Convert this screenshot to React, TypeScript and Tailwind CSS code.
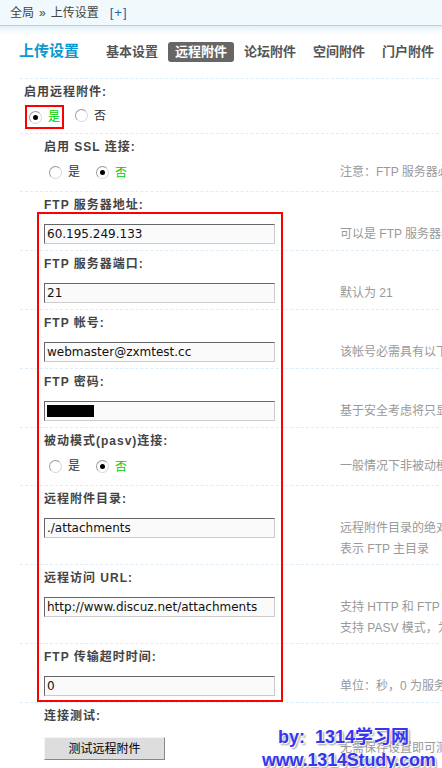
import type { ReactNode } from "react";

const SANS = "font-['Liberation_Sans','Noto_Sans_CJK_SC',sans-serif]";

function Radio({ checked, label }: { checked?: boolean; label: string }) {
  return (
    <span className="inline-flex items-center">
      <span className="w-[13px] h-[13px] rounded-full border border-[#9a9a9a] border-r-[#d8d8d8] border-b-[#d8d8d8] bg-white flex items-center justify-center">
        {checked && <span className="w-[5px] h-[5px] rounded-full bg-black" />}
      </span>
      <span className={`ml-[6px] ${checked ? "text-[#00cc00]" : "text-[#333]"}`}>{label}</span>
    </span>
  );
}

function Label({ children, indent = true }: { children: ReactNode; indent?: boolean }) {
  return (
    <div
      className={`pt-[5px] leading-[16px] text-[12px] font-bold tracking-[1px] text-[#444] ${
        indent ? "pl-[24px]" : "pl-[4px]"
      }`}
    >
      {children}
    </div>
  );
}

function Note({ lines }: { lines: string[] }) {
  return (
    <div className="text-[#999] leading-[21px] whitespace-nowrap text-[12px]">
      {lines.map((l) => (
        <div key={l}>{l}</div>
      ))}
    </div>
  );
}

function TextInput({ value, password }: { value?: string; password?: boolean }) {
  return (
    <div className="w-[231px] h-[20px] border border-[#666] border-r-[#ccc] border-b-[#ccc] bg-[#fafafa] flex items-center pl-[2px] font-['DejaVu_Sans',sans-serif] text-[12px] text-[#111] whitespace-nowrap overflow-hidden">
      {password ? <span className="w-[47px] h-[12px] bg-black" /> : value}
    </div>
  );
}

function InputSection({ label, value, password, note }: { label: string; value?: string; password?: boolean; note: string[] }) {
  return (
    <div className={`border-t border-dashed border-[#ddeefa] ${note.length > 1 ? "pb-[4px]" : "pb-[5px]"}`}>
      <Label>{label}</Label>
      <div className="flex mt-[11px] pl-[24px]">
        <div className="w-[296px] shrink-0">
          <TextInput value={value} password={password} />
        </div>
        <Note lines={note} />
      </div>
    </div>
  );
}

function RadioSection({ label, yes, note }: { label: string; yes: boolean; note: string }) {
  return (
    <div className="border-t border-dashed border-[#ddeefa] pb-[8px]">
      <Label>{label}</Label>
      <div className="flex mt-[6px] h-[22px] items-center pl-[24px]">
        <div className="w-[296px] shrink-0 flex items-center pl-[5px]">
          <Radio checked={yes} label="是" />
          <span className="ml-[16px]">
            <Radio checked={!yes} label="否" />
          </span>
        </div>
        <Note lines={[note]} />
      </div>
    </div>
  );
}

export default function App() {
  const tabs = ["基本设置", "远程附件", "论坛附件", "空间附件", "门户附件"];
  return (
    <div className={`relative w-[442px] h-[768px] overflow-hidden bg-white text-[12px] text-[#333] ${SANS}`}>
      {/* breadcrumb */}
      <div className="h-[26px] bg-[#f2f9fd] border-b border-[#b7d1dc] pl-[10px] flex items-center gap-[5px] whitespace-nowrap text-[12px] text-[#444]">
        <span>全局</span>
        <span>»</span>
        <span>上传设置</span>
        <span className="text-[#2366a8] text-[13px] ml-[6px] tracking-[1px]">[+]</span>
      </div>
      <div className="h-[8px] bg-gradient-to-b from-[#e4f1f9] to-white" />

      {/* tabs */}
      <div className="h-[44px] flex items-start pt-[8px] pl-[19px] whitespace-nowrap">
        <div className="text-[15px] font-bold text-[#0a99d0] leading-[16px] mt-[1px] w-[80px]">上传设置</div>
        <div className="flex gap-[3px]">
          {tabs.map((t) => (
            <div
              key={t}
              className={`h-[20px] px-[7px] rounded-[3px] text-[13px] font-bold leading-[20px] ${
                t === "远程附件" ? "bg-[#666] text-white" : "text-[#555]"
              }`}
            >
              {t}
            </div>
          ))}
        </div>
      </div>

      <div className="ml-[20px] w-[700px]">
        {/* 启用远程附件 */}
        <div className="border-t border-dashed border-[#ddeefa] pb-[5px]">
          <Label indent={false}>启用远程附件:</Label>
          <div className="flex mt-[6px] h-[22px] items-center pl-[5px]">
            <span className="inline-flex items-center h-[24px] px-[2px] border-2 border-[#ff0000]">
              <Radio checked label="是" />
            </span>
            <span className="ml-[11px]">
              <Radio label="否" />
            </span>
          </div>
        </div>

        <RadioSection label="启用 SSL 连接:" yes={false} note="注意：FTP 服务器必需开启了 SSL" />
        <InputSection label="FTP 服务器地址:" value="60.195.249.133" note={["可以是 FTP 服务器的 IP 地址或域名"]} />
        <InputSection label="FTP 服务器端口:" value="21" note={["默认为 21"]} />
        <InputSection label="FTP 帐号:" value="webmaster@zxmtest.cc" note={["该帐号必需具有以下权限：读取文件 写入文件 删除文件 创建目录 子目录继承"]} />
        <InputSection label="FTP 密码:" password note={["基于安全考虑将只显示 FTP 密码的第一位和最后一位，中间显示八个 * 号"]} />
        <RadioSection label="被动模式(pasv)连接:" yes={false} note="一般情况下非被动模式即可，如果存在上传失败问题，可尝试打开此设置" />
        <InputSection
          label="远程附件目录:"
          value="./attachments"
          note={["远程附件目录的绝对路径或相对于 FTP 主目录的相对路径，结尾不要加斜杠“/”，“.”", "表示 FTP 主目录"]}
        />
        <InputSection
          label="远程访问 URL:"
          value="http://www.discuz.net/attachments"
          note={["支持 HTTP 和 FTP 协议，结尾不要加斜杠“/”；如果使用 FTP 协议，FTP 服务器必需", "支持 PASV 模式，为了安全起见，使用 FTP 连接的帐号不要设置可写权限和列表权限"]}
        />
        <InputSection label="FTP 传输超时时间:" value="0" note={["单位：秒，0 为服务器默认"]} />

        {/* 连接测试 */}
        <div className="border-t border-dashed border-[#ddeefa]">
          <Label>连接测试:</Label>
          <div className="flex mt-[13px] pl-[24px] items-center">
            <div className="w-[296px] shrink-0">
              <button
                type="button"
                className="w-[121px] h-[23px] bg-[#dddddd] border border-[#f4f4f4] border-r-[#888] border-b-[#888] text-[12px] text-black"
              >
                测试远程附件
              </button>
            </div>
            <Note lines={["无需保存设置即可测试，请在测试通过后再保存"]} />
          </div>
        </div>
      </div>

      {/* annotation box */}
      <div className="absolute left-[37px] top-[212px] w-[246px] h-[490px] border-2 border-[#ff0000] pointer-events-none" />

      {/* watermark */}
      <div className="absolute left-[278px] top-[727px] text-[18px] font-bold text-[#3535f2] leading-[20px] whitespace-pre [text-shadow:1px_1px_0_#fff,2px_2px_2px_#999] font-['Liberation_Sans','Noto_Sans_CJK_SC',sans-serif]">
        by:  1314学习网
      </div>
      <div className="absolute left-[262px] top-[750px] text-[18px] font-bold text-[#3535f2] leading-[20px] whitespace-nowrap tracking-[-0.2px] [text-shadow:1px_1px_0_#fff,2px_2px_2px_#999] font-['Liberation_Sans',sans-serif]">
        www.1314Study.com
      </div>
    </div>
  );
}
